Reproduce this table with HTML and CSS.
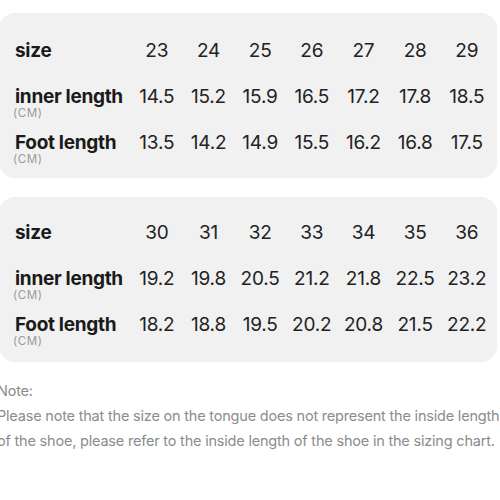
FILE: index.html
```html
<!DOCTYPE html>
<html>
<head>
<meta charset="utf-8">
<link rel="stylesheet" href="styles.css">
</head>
<body>
<div class="page">
  <div class="card card-top">
    <div class="grid">
      <div class="label"><span class="name">size</span></div>
      <div class="num">23</div><div class="num">24</div><div class="num">25</div><div class="num">26</div><div class="num">27</div><div class="num">28</div><div class="num">29</div>
      <div class="label"><span class="name">inner length</span><span class="unit">(CM)</span></div>
      <div class="num">14.5</div><div class="num">15.2</div><div class="num">15.9</div><div class="num">16.5</div><div class="num">17.2</div><div class="num">17.8</div><div class="num">18.5</div>
      <div class="label"><span class="name">Foot length</span><span class="unit">(CM)</span></div>
      <div class="num">13.5</div><div class="num">14.2</div><div class="num">14.9</div><div class="num">15.5</div><div class="num">16.2</div><div class="num">16.8</div><div class="num">17.5</div>
    </div>
  </div>
  <div class="card card-bottom">
    <div class="grid">
      <div class="label"><span class="name">size</span></div>
      <div class="num">30</div><div class="num">31</div><div class="num">32</div><div class="num">33</div><div class="num">34</div><div class="num">35</div><div class="num">36</div>
      <div class="label"><span class="name">inner length</span><span class="unit">(CM)</span></div>
      <div class="num">19.2</div><div class="num">19.8</div><div class="num">20.5</div><div class="num">21.2</div><div class="num">21.8</div><div class="num">22.5</div><div class="num">23.2</div>
      <div class="label"><span class="name">Foot length</span><span class="unit">(CM)</span></div>
      <div class="num">18.2</div><div class="num">18.8</div><div class="num">19.5</div><div class="num">20.2</div><div class="num">20.8</div><div class="num">21.5</div><div class="num">22.2</div>
    </div>
  </div>
  <div class="note">
    <p>Note:</p>
    <p>Please note that the size on the tongue does not represent the inside length</p>
    <p>of the shoe, please refer to the inside length of the shoe in the sizing chart.</p>
  </div>
</div>
</body>
</html>
```
FILE: styles.css
```css
html, body {
  margin: 0;
  padding: 0;
  background: #ffffff;
  overflow: hidden;
}
body {
  width: 500px;
  height: 500px;
  font-family: Inter, "Noto Sans", sans-serif;
  color: #1a1a1a;
}
.page {
  padding-top: 13px;
}
.card {
  background: #f1f1f1;
  border-radius: 16px;
  width: 498px;
  margin-left: -1px;
  box-sizing: border-box;
  padding: 0 0 0 16px;
}
.card-top {
  height: 165px;
  padding-top: 28px;
}
.card-bottom {
  margin-top: 19px;
  height: 165px;
  padding-top: 26px;
}
.grid {
  display: grid;
  grid-template-columns: 116px repeat(7, 51.67px);
  grid-auto-rows: 46px;
}
.label {
  display: flex;
  flex-direction: column;
}
.name {
  font-weight: 700;
  font-size: 19px;
  letter-spacing: -0.3px;
  line-height: 19px;
  height: 19px;
}
.unit {
  font-size: 11.5px;
  line-height: 12px;
  color: #9a9a9a;
  letter-spacing: 0.6px;
  margin-top: 1px;
  margin-left: -2px;
}
.num {
  text-align: center;
  font-size: 19px;
  line-height: 19px;
  font-weight: 400;
  color: #222;
  letter-spacing: -0.2px;
}
.note {
  margin-top: 16px;
  margin-left: -3px;
  color: #8c8c8c;
  font-size: 14.5px;
  letter-spacing: -0.2px;
  white-space: nowrap;
}
.note p {
  margin: 0;
  line-height: 25px;
}
```
